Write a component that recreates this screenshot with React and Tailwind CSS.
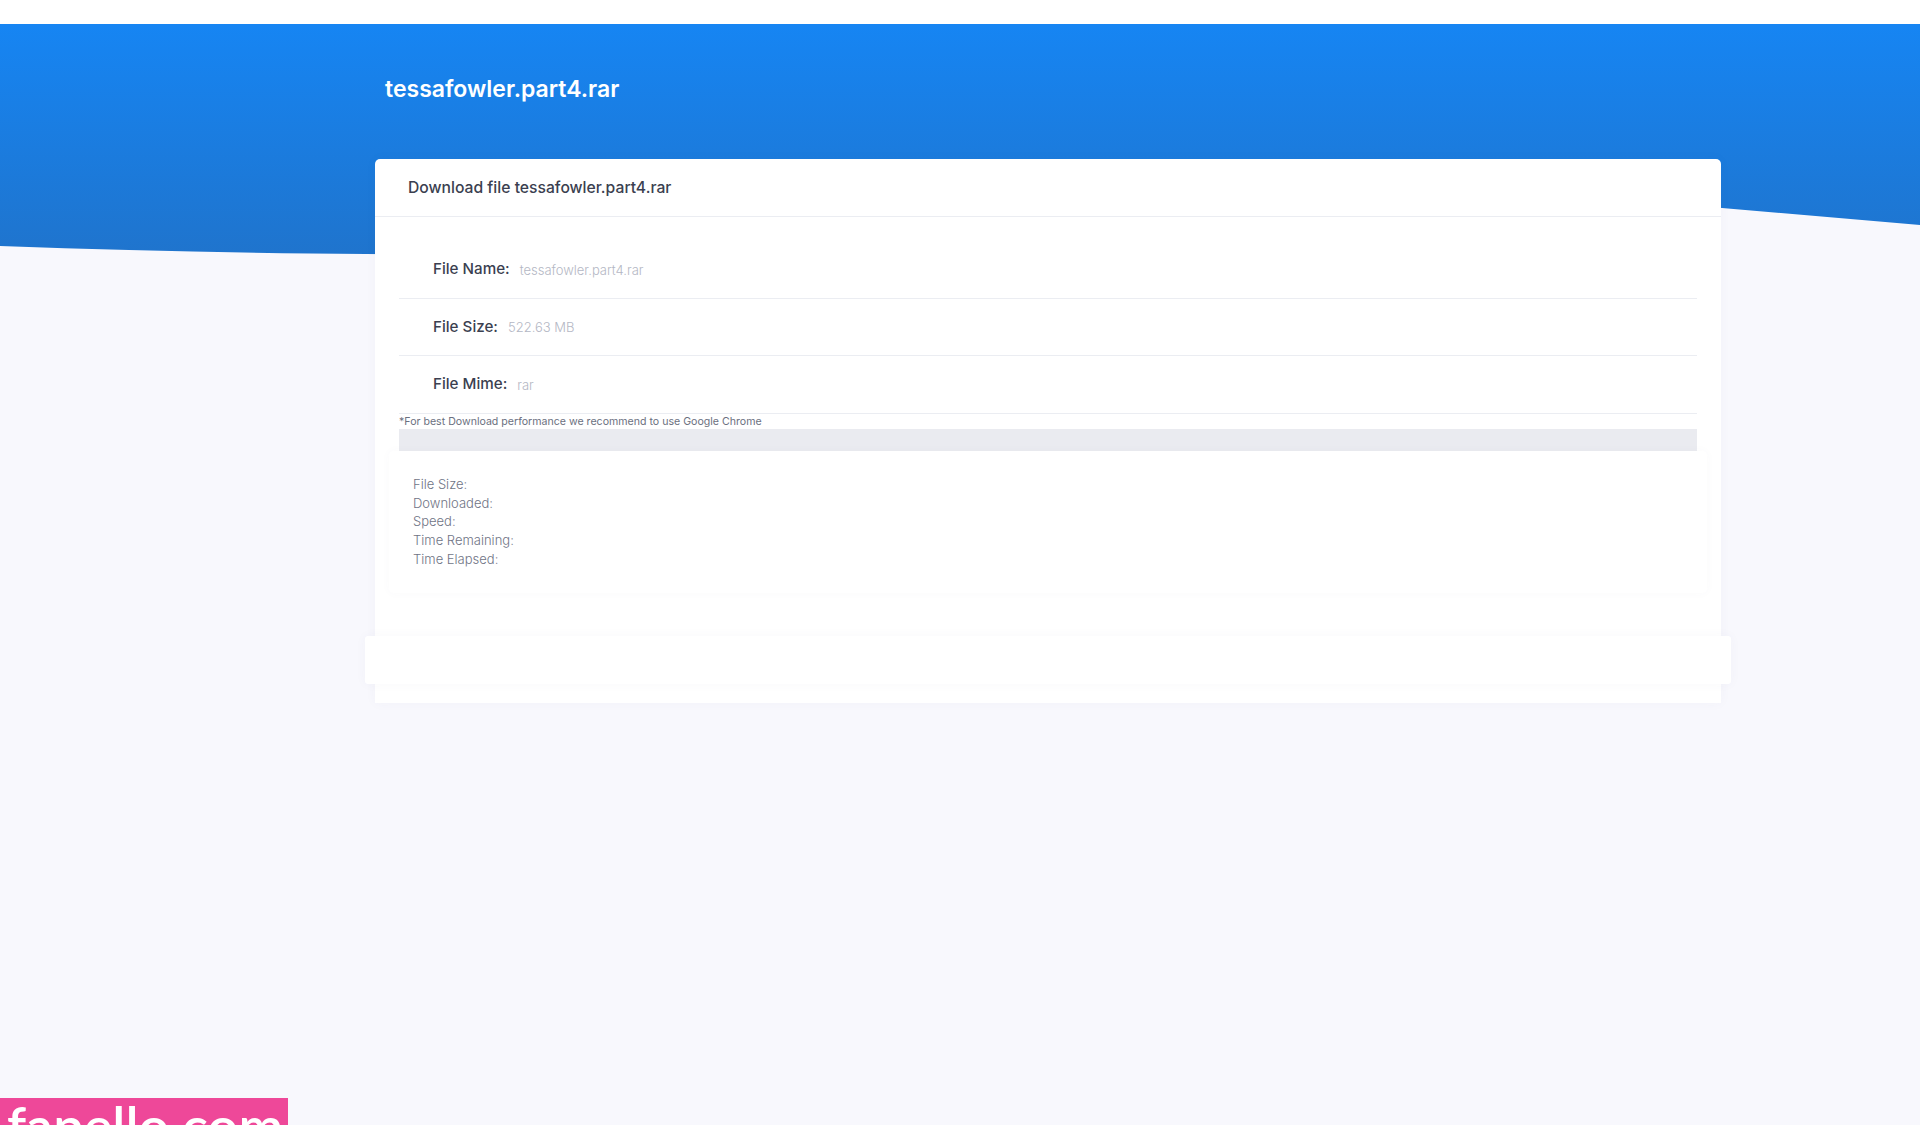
import React from 'react'

const font = "font-['Inter','Liberation_Sans',sans-serif]"

function Wave() {
  return (
    <svg className="absolute left-0 top-0 w-full h-[260px]" viewBox="0 0 1920 260" preserveAspectRatio="none">
      <defs>
        <linearGradient id="hero" x1="0" y1="24" x2="0" y2="254" gradientUnits="userSpaceOnUse">
          <stop offset="0" stopColor="#1685f3" />
          <stop offset="1" stopColor="#1f74cd" />
        </linearGradient>
      </defs>
      <path d="M0 24H1920V225L1722 208C1400 180 1000 240 800 250C600 256 300 257 0 246Z" fill="url(#hero)" />
    </svg>
  )
}

function FileRow({ label, value }) {
  return (
    <div className="flex items-center h-[57.67px] pl-[34px] border-b border-[#ebedf2]">
      <span className="text-[15.2px] font-medium text-[#3b3f50]">{label}</span>
      <span className="ml-[10px] mt-[2px] text-[13px] font-light text-[#b4b7c4]">{value}</span>
    </div>
  )
}

function App() {
  return (
    <div className={`${font} relative h-[1125px] overflow-hidden bg-[#f8f8fd]`}>
      <Wave />
      <div className="relative h-6 bg-white"></div>

      <div className="relative w-[1346px] ml-[375px]">
        <h1 className="h-[135px] pt-[47px] pl-[10px] text-[23px] leading-9 font-semibold text-white">tessafowler.part4.rar</h1>

        <div className="bg-white rounded-t-[5px] shadow-[0_0_12px_rgba(80,80,120,0.04)] pb-[19px]">
          <div className="flex items-center h-[58px] pl-[33px] pt-[1px] border-b border-[#ebedf2]">
            <span className="text-[15.7px] font-medium text-[#3b3f50]">Download file tessafowler.part4.rar</span>
          </div>

          <div className="px-6 pt-6">
            <FileRow label="File Name:" value="tessafowler.part4.rar" />
            <FileRow label="File Size:" value="522.63 MB" />
            <FileRow label="File Mime:" value="rar" />
            <p className="h-[15px] text-[10.6px] leading-[15px] text-[#6b7080]">*For best Download performance we recommend to use Google Chrome</p>
            <div className="h-[22px] bg-[#eaebf0]"></div>
            <div className="-mx-[10px] py-6 pl-6 rounded-[5px] bg-white shadow-[0_0_10px_rgba(80,80,120,0.03)] text-[13px] leading-[18.75px] font-light text-[#6f7485]">
              <p>File Size:</p>
              <p>Downloaded:</p>
              <p>Speed:</p>
              <p>Time Remaining:</p>
              <p>Time Elapsed:</p>
            </div>
          </div>

          <div className="-mx-[10px] mt-[43px] h-12 rounded-[3px] bg-white shadow-[0_0_12px_rgba(80,80,120,0.04)]"></div>
        </div>
      </div>

      <div className="absolute left-0 top-[1098px] w-[288px] h-[60px] pl-[7px] bg-[#ee4899] text-[54px] leading-[56px] font-semibold text-white font-['Lato',sans-serif] whitespace-nowrap">fapello.com</div>
    </div>
  )
}

export default App
